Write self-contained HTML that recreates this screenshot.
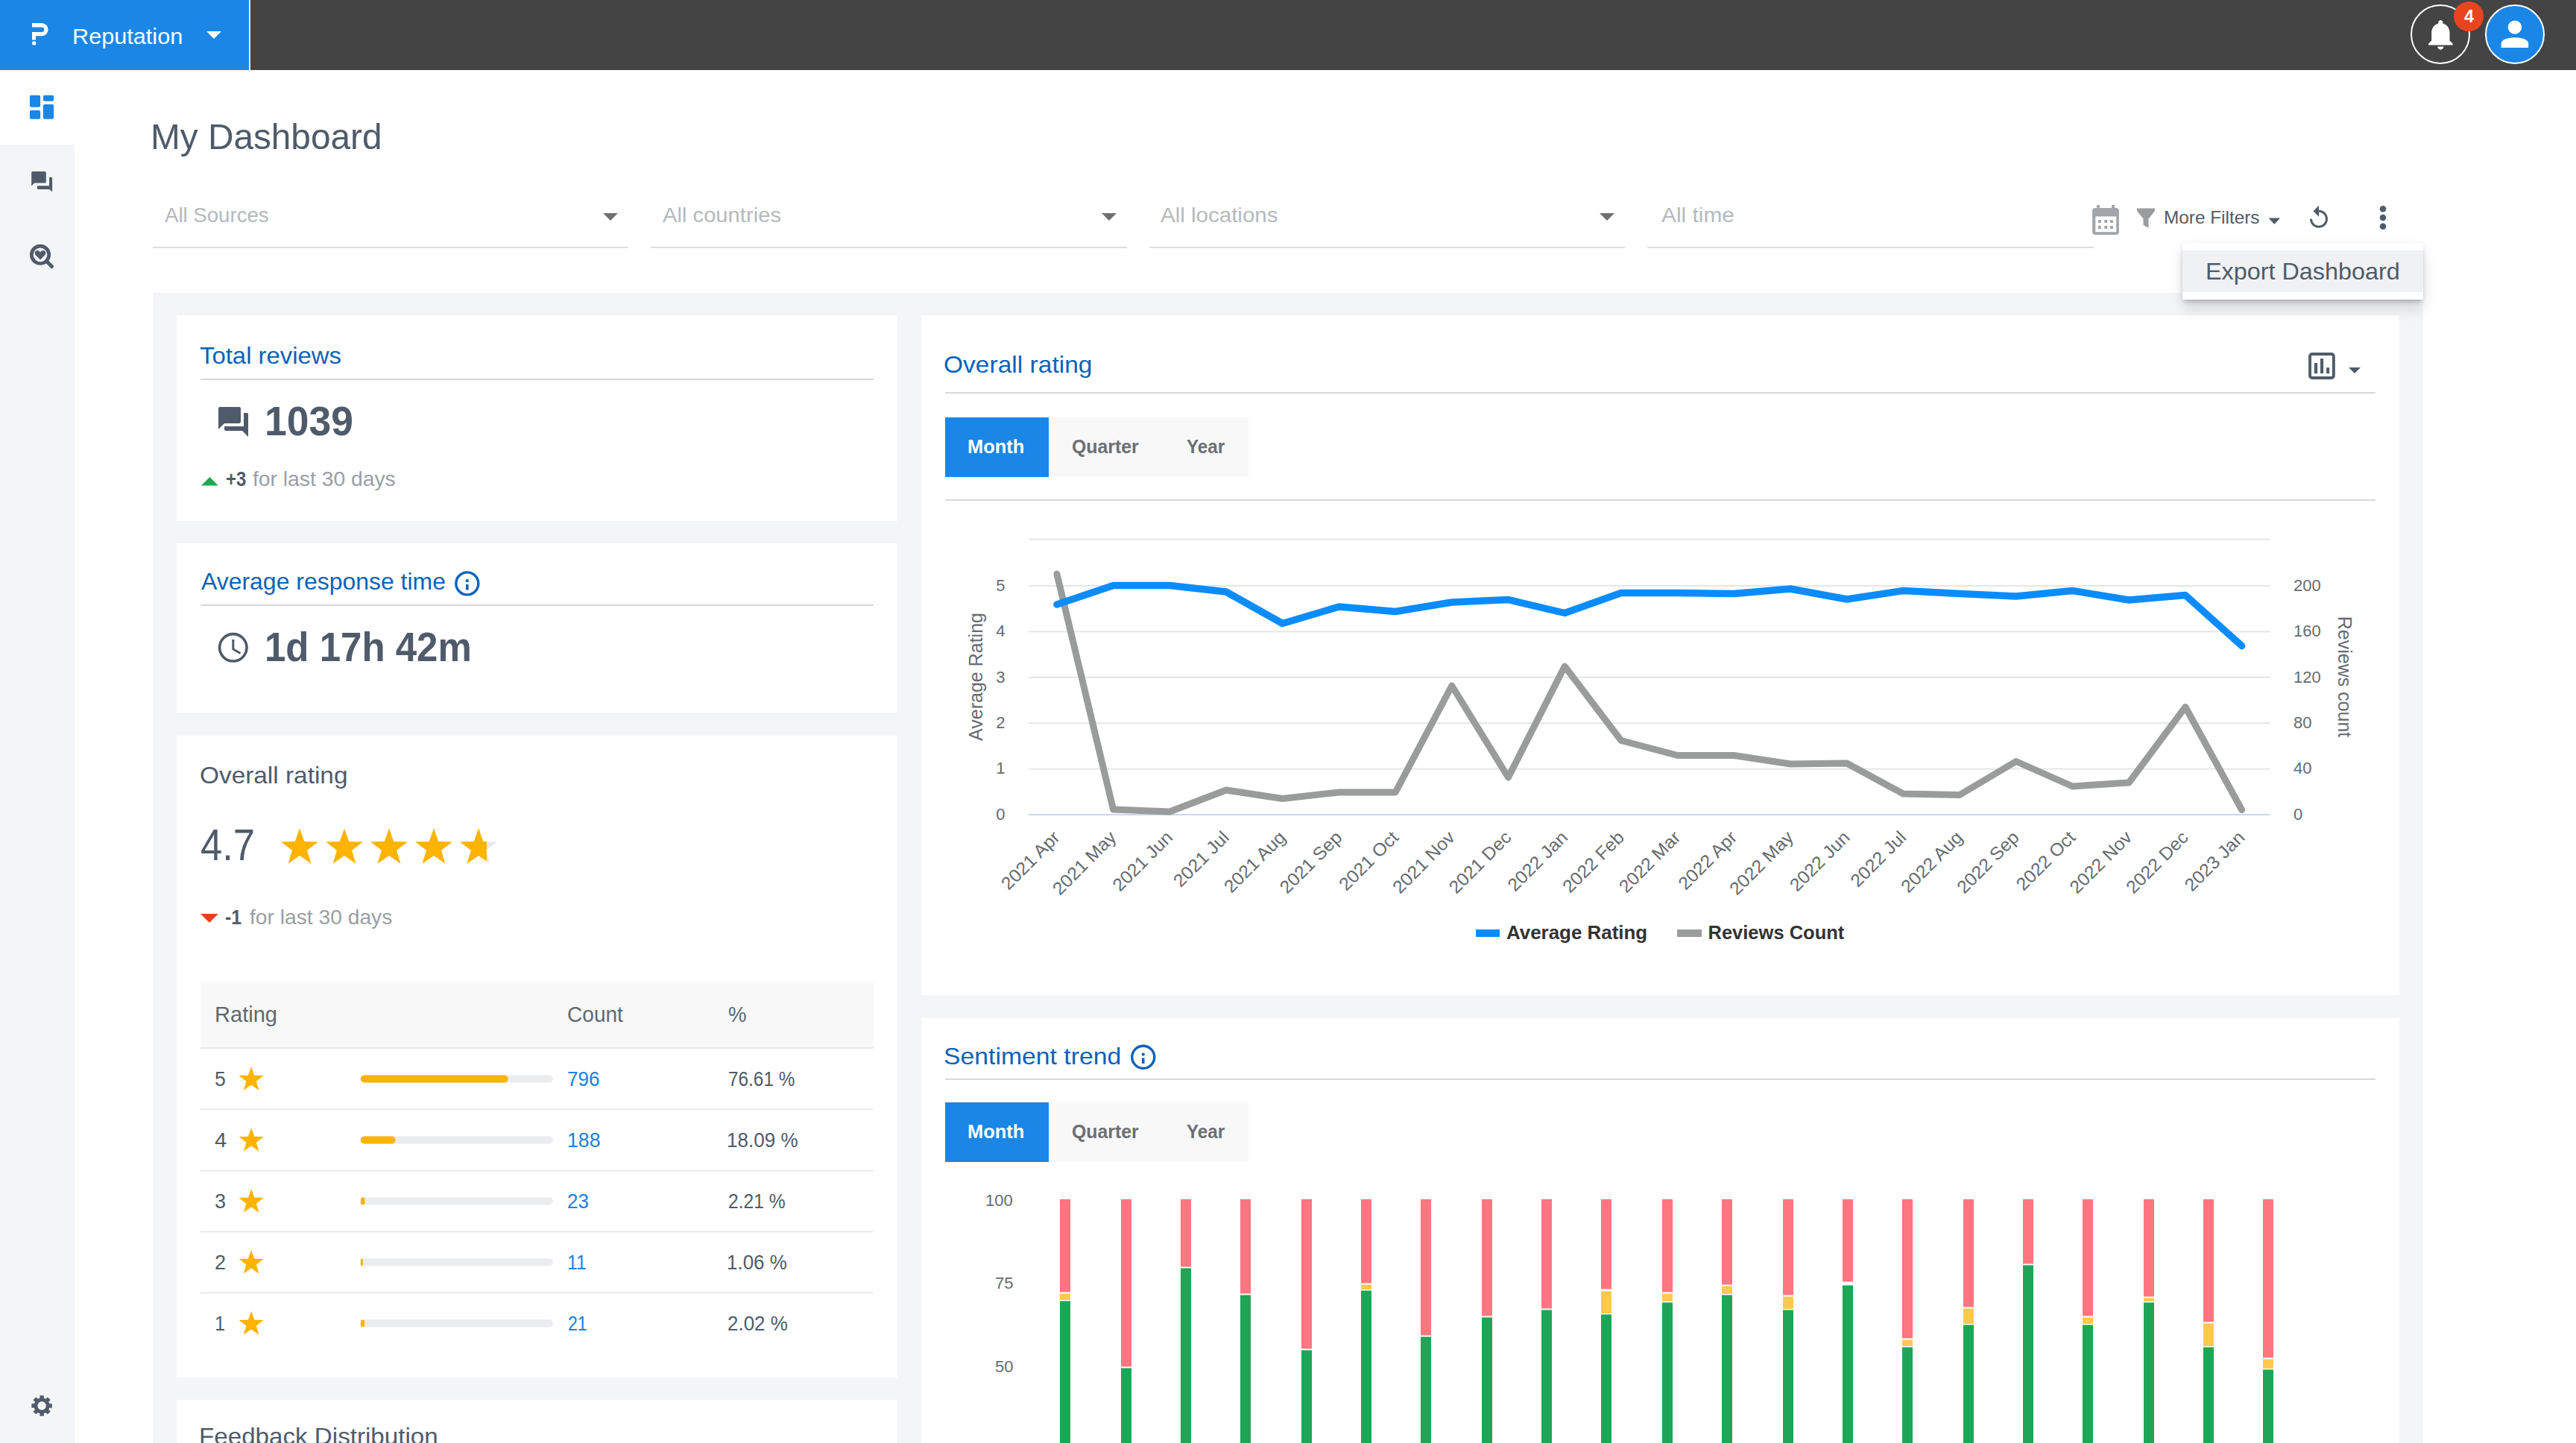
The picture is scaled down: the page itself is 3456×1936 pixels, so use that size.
<!DOCTYPE html>
<html><head><meta charset="utf-8"><title>My Dashboard</title>
<style>
html,body{margin:0;padding:0;width:3456px;height:1936px;overflow:hidden;background:#fff}
body{position:relative;font-family:"Liberation Sans",sans-serif}
.r{position:absolute;box-sizing:content-box}
.t{position:absolute;white-space:nowrap;line-height:1;font-family:"Liberation Sans",sans-serif}
svg{overflow:visible}
</style></head><body><div id="root" style="position:relative;width:3456px;height:1936px;overflow:hidden">
<div class="r" style="left:0px;top:0px;width:3456px;height:1936px;background:#ffffff;"></div>
<div class="r" style="left:0px;top:0px;width:334px;height:94px;background:#1a87e6;"></div>
<div class="r" style="left:334px;top:0px;width:2px;height:94px;background:#f2f2f2;"></div>
<div class="r" style="left:336px;top:0px;width:3120px;height:94px;background:#444444;"></div>
<div class="r" style="left:0px;top:94px;width:100px;height:1842px;background:#f4f5f7;"></div>
<div class="r" style="left:0px;top:94px;width:100px;height:100px;background:#ffffff;"></div>
<svg class="r" style="left:0;top:0" width="100" height="94" viewBox="0 0 100 94"><path fill="#fff" d="M43 31.1H56A8.55 8.55 0 0 1 56 48.2H48V53.4H43V43H56A3.25 3.25 0 0 0 56 36.5H43Z"/><circle cx="45.7" cy="57.9" r="2.65" fill="#fff"/></svg>
<div class="t" id="t0" style="left:97.13px;top:33.90px;font-size:30px;color:#ffffff;font-weight:400;transform:scaleX(1.0215);transform-origin:0 0;">Reputation</div>
<svg class="r" style="left:277px;top:42px" width="20" height="10"><path d="M0 0H20L10 10Z" fill="#fff"/></svg>
<div class="r" style="left:3234px;top:6px;width:76px;height:76px;border:2px solid #fff;border-radius:50%"></div>
<svg class="r" style="left:3249.5px;top:21.7px" width="48.7" height="48.7" viewBox="0 0 24 24"><path fill="#fff" d="M12 22c1.1 0 2-.9 2-2h-4c0 1.1.89 2 2 2zm6-6v-5c0-3.07-1.64-5.64-4.5-6.32V4c0-.83-.67-1.5-1.5-1.5s-1.5.67-1.5 1.5v.68C7.63 5.36 6 7.92 6 11v5l-2 2v1h16v-1l-2-2z"/></svg>
<div class="r" style="left:3292px;top:2px;width:40px;height:40px;border-radius:50%;background:#e8451e"></div>
<div class="t" id="t1" style="left:3305.92px;top:9.88px;font-size:24px;color:#fff;font-weight:700;transform:scaleX(0.9715);transform-origin:0 0;">4</div>
<div class="r" style="left:3334px;top:6px;width:76px;height:76px;border:2px solid #fff;border-radius:50%;background:#1a87e6"></div>
<svg class="r" style="left:3334px;top:6px" width="80" height="80" viewBox="3334 6 80 80"><circle cx="3373.9" cy="36.6" r="9.2" fill="#fff"/><path fill="#fff" d="M3355.6 64.1V58.5C3355.6 47.5 3392.2 47.5 3392.2 58.5V64.1Z"/></svg>
<svg class="r" style="left:0;top:94px" width="100" height="300" viewBox="0 94 100 300"><g fill="#1a87e6"><rect x="39.9" y="127.8" width="14.2" height="16" rx="2"/><rect x="39.9" y="147.9" width="14.2" height="11.9" rx="2"/><rect x="57.9" y="127.8" width="14.2" height="8" rx="2"/><rect x="57.9" y="140" width="14.2" height="19.8" rx="2"/></g><path fill="#4f5b6a" d="M43.7 229.9H60.3Q61.8 229.9 61.8 231.4V244Q61.8 245.5 60.3 245.5H46.2L42.2 249.5V231.4Q42.2 229.9 43.7 229.9Z M66.1 237.8H68.6Q70.1 237.8 70.1 239.3V257.6L66.3 253.9H51.5Q50 253.9 50 252.4V249.3H66.1Z"/><circle cx="54" cy="341.8" r="11.7" fill="none" stroke="#4f5b6a" stroke-width="4.7"/><path d="M62.5 350.5L69.5 357.5" stroke="#4f5b6a" stroke-width="5" stroke-linecap="round"/><path fill="#4f5b6a" d="M54 348.4L47.8 342.2C45.8 340.2 46.6 336 50 336C51.8 336 53 337 54 338.4C55 337 56.2 336 58 336C61.4 336 62.2 340.2 60.2 342.2Z"/></svg>
<svg class="r" style="left:0;top:1850px" width="100" height="86" viewBox="0 1850 100 86"><path fill="#4f5b6a" fill-rule="evenodd" d="M66.35 1883.30 L69.84 1883.30 L69.84 1888.70 L66.35 1888.70 L65.26 1891.34 L67.72 1893.80 L63.90 1897.62 L61.44 1895.16 L58.80 1896.25 L58.80 1899.74 L53.40 1899.74 L53.40 1896.25 L50.76 1895.16 L48.30 1897.62 L44.48 1893.80 L46.94 1891.34 L45.85 1888.70 L42.36 1888.70 L42.36 1883.30 L45.85 1883.30 L46.94 1880.66 L44.48 1878.20 L48.30 1874.38 L50.76 1876.84 L53.40 1875.75 L53.40 1872.26 L58.80 1872.26 L58.80 1875.75 L61.44 1876.84 L63.90 1874.38 L67.72 1878.20 L65.26 1880.66Z M56.1 1880.3A5.7 5.7 0 1 0 56.11 1880.3Z"/></svg>
<div class="t" id="t2" style="left:202.10px;top:158.52px;font-size:49px;color:#4f5b6a;font-weight:400;transform:scaleX(0.9743);transform-origin:0 0;">My Dashboard</div>
<div class="r" style="left:205px;top:331px;width:638px;height:2px;background:#dcdee0;"></div>
<div class="t" id="t3" style="left:220.51px;top:275.30px;font-size:28px;color:#b5b9be;font-weight:400;transform:scaleX(0.9857);transform-origin:0 0;">All Sources</div>
<svg class="r" style="left:809px;top:286px" width="20" height="10"><path d="M0 0H20L10 10Z" fill="#707070"/></svg>
<div class="r" style="left:873px;top:331px;width:639px;height:2px;background:#dcdee0;"></div>
<div class="t" id="t4" style="left:889.28px;top:275.30px;font-size:28px;color:#b5b9be;font-weight:400;transform:scaleX(1.0424);transform-origin:0 0;">All countries</div>
<svg class="r" style="left:1478px;top:286px" width="20" height="10"><path d="M0 0H20L10 10Z" fill="#707070"/></svg>
<div class="r" style="left:1542px;top:331px;width:638px;height:2px;background:#dcdee0;"></div>
<div class="t" id="t5" style="left:1557.47px;top:275.30px;font-size:28px;color:#b5b9be;font-weight:400;transform:scaleX(1.0541);transform-origin:0 0;">All locations</div>
<svg class="r" style="left:2146px;top:286px" width="20" height="10"><path d="M0 0H20L10 10Z" fill="#707070"/></svg>
<div class="r" style="left:2210px;top:331px;width:599px;height:2px;background:#dcdee0;"></div>
<div class="t" id="t6" style="left:2229.47px;top:275.30px;font-size:28px;color:#b5b9be;font-weight:400;transform:scaleX(1.0669);transform-origin:0 0;">All time</div>
<svg class="r" style="left:2800px;top:270px" width="460" height="50" viewBox="2800 270 460 50"><rect x="2807.1" y="279.1" width="35.8" height="35.9" rx="4" fill="#a2a5aa"/><rect x="2811.3" y="290.4" width="27.9" height="20.8" fill="#fff"/><g fill="#a2a5aa"><rect x="2814.8" y="295" width="3.9" height="4"/><rect x="2823.3" y="295" width="3.9" height="4"/><rect x="2831" y="295" width="3.9" height="4"/><rect x="2814.8" y="303" width="3.9" height="4"/><rect x="2823.3" y="303" width="3.9" height="4"/><rect x="2831" y="303" width="3.9" height="4"/><rect x="2813" y="275" width="4" height="6"/><rect x="2833" y="275" width="4" height="6"/></g><path fill="#9a9d9f" d="M2867 279.6H2891V283L2882.5 293.5V305.8L2875.5 302V293.5L2867 283Z"/><path fill="#4f5b6a" d="M3043.6 292.5H3059L3051.3 301Z"/><g transform="translate(3093 274.2) scale(1.5)"><path fill="#4f5b6a" d="M12 5V1L7 6l5 5V7c3.31 0 6 2.69 6 6s-2.69 6-6 6-6-2.69-6-6H4c0 4.42 3.58 8 8 8s8-3.58 8-8-3.58-8-8-8z"/></g><g fill="#4f5b6a"><circle cx="3197" cy="280.2" r="4.3"/><circle cx="3197" cy="292" r="4.3"/><circle cx="3197" cy="303.8" r="4.3"/></g></svg>
<div class="t" id="t7" style="left:2903.17px;top:279.68px;font-size:24px;color:#4f5b6a;font-weight:400;transform:scaleX(1.0145);transform-origin:0 0;">More Filters</div>
<div class="r" style="left:205px;top:393px;width:3045.5px;height:1543px;background:#f4f5f7;"></div>
<div class="r" style="left:237px;top:423px;width:966.5px;height:275.5px;background:#fff;"></div>
<div class="r" style="left:237px;top:729px;width:966.5px;height:227px;background:#fff;"></div>
<div class="r" style="left:237px;top:986.5px;width:966.5px;height:861px;background:#fff;"></div>
<div class="r" style="left:237px;top:1877.5px;width:966.5px;height:60px;background:#fff;"></div>
<div class="r" style="left:1236px;top:423px;width:1983px;height:912px;background:#fff;"></div>
<div class="r" style="left:1236px;top:1366px;width:1983px;height:570px;background:#fff;"></div>
<div class="t" id="t8" style="left:267.97px;top:460.91px;font-size:32px;color:#0a62b8;font-weight:400;transform:scaleX(1.0273);transform-origin:0 0;">Total reviews</div>
<div class="r" style="left:269px;top:508px;width:902.5px;height:2px;background:#d8d8d9;"></div>
<svg class="r" style="left:288.9px;top:541.6px" width="48" height="48" viewBox="0 0 24 24"><path fill="#4f5b6a" d="M21 6h-2v9H6v2c0 .55.45 1 1 1h11l4 4V7c0-.55-.45-1-1-1zm-4 6V3c0-.55-.45-1-1-1H3c-.55 0-1 .45-1 1v14l4-4h10c.55 0 1-.45 1-1z"/></svg>
<div class="t" id="t9" style="left:354.83px;top:536.59px;font-size:56px;color:#4f5b6a;font-weight:700;transform:scaleX(0.9541);transform-origin:0 0;">1039</div>
<svg class="r" style="left:269.6px;top:639.6px" width="23" height="12"><path d="M0 11.6H22.7L11.35 0Z" fill="#1ea653"/></svg>
<div class="t" id="t10" style="left:303.32px;top:629.10px;font-size:28px;color:#4f5b6a;font-weight:700;transform:scaleX(0.8558);transform-origin:0 0;">+3</div>
<div class="t" id="t11" style="left:338.99px;top:629.10px;font-size:28px;color:#9a9fa4;font-weight:400;transform:scaleX(1.0096);transform-origin:0 0;">for last 30 days</div>
<div class="t" id="t12" style="left:269.50px;top:764.01px;font-size:32px;color:#0a62b8;font-weight:400;transform:scaleX(0.9982);transform-origin:0 0;">Average response time</div>
<svg class="r" style="left:605px;top:761px" width="44" height="44" viewBox="605 761 44 44"><circle cx="626.8" cy="782.9" r="15" fill="none" stroke="#0a62b8" stroke-width="3.4"/><circle cx="626.8" cy="779.2" r="2.1" fill="#0a62b8"/><rect x="625" y="784" width="3.6" height="7.5" fill="#0a62b8"/></svg>
<div class="r" style="left:269px;top:811px;width:902.5px;height:2px;background:#d8d8d9;"></div>
<svg class="r" style="left:288px;top:844px" width="50" height="50" viewBox="288 844 50 50"><circle cx="312.8" cy="868.8" r="18.2" fill="none" stroke="#4f5b6a" stroke-width="3.6"/><path d="M312.8 858V871L322.5 876.5" fill="none" stroke="#4f5b6a" stroke-width="3"/></svg>
<div class="t" id="t13" style="left:354.92px;top:839.99px;font-size:56px;color:#4f5b6a;font-weight:700;transform:scaleX(0.9108);transform-origin:0 0;">1d 17h 42m</div>
<div class="t" id="t14" style="left:267.93px;top:1024.11px;font-size:32px;color:#4f5b6a;font-weight:400;transform:scaleX(1.0428);transform-origin:0 0;">Overall rating</div>
<div class="t" id="t15" style="left:269.44px;top:1104.40px;font-size:60px;color:#4f5b6a;font-weight:400;transform:scaleX(0.8755);transform-origin:0 0;">4.7</div>
<svg class="r" style="left:360px;top:1100px" width="330" height="70" viewBox="360 1100 330 70"><defs><clipPath id="c5"><rect x="617" y="1100" width="36" height="70"/></clipPath></defs><path d="M402.00 1111.30 L408.23 1128.92 L426.92 1129.40 L412.08 1140.78 L417.40 1158.70 L402.00 1148.10 L386.60 1158.70 L391.92 1140.78 L377.08 1129.40 L395.77 1128.92Z" fill="#fdb300"/><path d="M462.00 1111.30 L468.23 1128.92 L486.92 1129.40 L472.08 1140.78 L477.40 1158.70 L462.00 1148.10 L446.60 1158.70 L451.92 1140.78 L437.08 1129.40 L455.77 1128.92Z" fill="#fdb300"/><path d="M522.00 1111.30 L528.23 1128.92 L546.92 1129.40 L532.08 1140.78 L537.40 1158.70 L522.00 1148.10 L506.60 1158.70 L511.92 1140.78 L497.08 1129.40 L515.77 1128.92Z" fill="#fdb300"/><path d="M582.00 1111.30 L588.23 1128.92 L606.92 1129.40 L592.08 1140.78 L597.40 1158.70 L582.00 1148.10 L566.60 1158.70 L571.92 1140.78 L557.08 1129.40 L575.77 1128.92Z" fill="#fdb300"/><path d="M642.00 1111.30 L648.23 1128.92 L666.92 1129.40 L652.08 1140.78 L657.40 1158.70 L642.00 1148.10 L626.60 1158.70 L631.92 1140.78 L617.08 1129.40 L635.77 1128.92Z" fill="#e9eaec"/><path d="M642.00 1111.30 L648.23 1128.92 L666.92 1129.40 L652.08 1140.78 L657.40 1158.70 L642.00 1148.10 L626.60 1158.70 L631.92 1140.78 L617.08 1129.40 L635.77 1128.92Z" fill="#fdb300" clip-path="url(#c5)"/></svg>
<svg class="r" style="left:269px;top:1225.7px" width="24" height="13"><path d="M0 0H23.9L11.95 12.1Z" fill="#e5431f"/></svg>
<div class="t" id="t16" style="left:302.16px;top:1216.70px;font-size:28px;color:#4f5b6a;font-weight:700;transform:scaleX(0.8871);transform-origin:0 0;">-1</div>
<div class="t" id="t17" style="left:334.50px;top:1216.70px;font-size:28px;color:#9a9fa4;font-weight:400;transform:scaleX(1.0074);transform-origin:0 0;">for last 30 days</div>
<div class="r" style="left:269px;top:1318px;width:902.5px;height:88.5px;background:#f8f8f8;"></div>
<div class="r" style="left:269px;top:1405px;width:902.5px;height:2px;background:#e6e7e8;"></div>
<div class="t" id="t18" style="left:287.58px;top:1346.30px;font-size:30px;color:#62676d;font-weight:400;transform:scaleX(0.9683);transform-origin:0 0;">Rating</div>
<div class="t" id="t19" style="left:760.60px;top:1346.30px;font-size:30px;color:#62676d;font-weight:400;transform:scaleX(0.9359);transform-origin:0 0;">Count</div>
<div class="t" id="t20" style="left:976.62px;top:1346.30px;font-size:30px;color:#62676d;font-weight:400;transform:scaleX(0.9167);transform-origin:0 0;">%</div>
<div class="t" id="t21" style="left:288.00px;top:1434.84px;font-size:27px;color:#4f5b6a;font-weight:400;transform:scaleX(0.9862);transform-origin:0 0;">5</div>
<div class="t" id="t22" style="left:760.59px;top:1434.10px;font-size:28px;color:#1b7fe0;font-weight:400;transform:scaleX(0.9324);transform-origin:0 0;">796</div>
<div class="t" id="t23" style="left:976.51px;top:1434.10px;font-size:28px;color:#4f5b6a;font-weight:400;transform:scaleX(0.8701);transform-origin:0 0;">76.61 %</div>
<div class="t" id="t24" style="left:287.92px;top:1516.84px;font-size:27px;color:#4f5b6a;font-weight:400;transform:scaleX(1.0769);transform-origin:0 0;">4</div>
<div class="t" id="t25" style="left:760.62px;top:1516.10px;font-size:28px;color:#1b7fe0;font-weight:400;transform:scaleX(0.9538);transform-origin:0 0;">188</div>
<div class="t" id="t26" style="left:975.35px;top:1516.10px;font-size:28px;color:#4f5b6a;font-weight:400;transform:scaleX(0.9306);transform-origin:0 0;">18.09 %</div>
<div class="t" id="t27" style="left:288.00px;top:1598.84px;font-size:27px;color:#4f5b6a;font-weight:400;">3</div>
<div class="t" id="t28" style="left:760.61px;top:1598.10px;font-size:28px;color:#1b7fe0;font-weight:400;transform:scaleX(0.9286);transform-origin:0 0;">23</div>
<div class="t" id="t29" style="left:976.50px;top:1598.10px;font-size:28px;color:#4f5b6a;font-weight:400;transform:scaleX(0.8800);transform-origin:0 0;">2.21 %</div>
<div class="t" id="t30" style="left:288.00px;top:1680.84px;font-size:27px;color:#4f5b6a;font-weight:400;">2</div>
<div class="t" id="t31" style="left:760.80px;top:1680.10px;font-size:28px;color:#1b7fe0;font-weight:400;transform:scaleX(0.8809);transform-origin:0 0;">11</div>
<div class="t" id="t32" style="left:975.36px;top:1680.10px;font-size:28px;color:#4f5b6a;font-weight:400;transform:scaleX(0.9276);transform-origin:0 0;">1.06 %</div>
<div class="t" id="t33" style="left:288.13px;top:1762.84px;font-size:27px;color:#4f5b6a;font-weight:400;transform:scaleX(0.9353);transform-origin:0 0;">1</div>
<div class="t" id="t34" style="left:761.75px;top:1762.10px;font-size:28px;color:#1b7fe0;font-weight:400;transform:scaleX(0.8229);transform-origin:0 0;">21</div>
<div class="t" id="t35" style="left:976.42px;top:1762.10px;font-size:28px;color:#4f5b6a;font-weight:400;transform:scaleX(0.9270);transform-origin:0 0;">2.02 %</div>
<svg class="r" style="left:269px;top:1407px" width="903" height="420" viewBox="269 1407 903 420"><path d="M337.10 1431.00 L341.27 1442.76 L353.74 1443.09 L343.85 1450.69 L347.39 1462.66 L337.10 1455.60 L326.81 1462.66 L330.35 1450.69 L320.46 1443.09 L332.93 1442.76Z" fill="#fdb300"/><rect x="483.8" y="1442.5" width="258.2" height="10" rx="5" fill="#ebeced"/><rect x="483.8" y="1442.5" width="197.8" height="10" rx="5.0" fill="#fdb300"/><rect x="269" y="1487.5" width="902.5" height="2" fill="#e8e9ea"/><path d="M337.10 1513.00 L341.27 1524.76 L353.74 1525.09 L343.85 1532.69 L347.39 1544.66 L337.10 1537.60 L326.81 1544.66 L330.35 1532.69 L320.46 1525.09 L332.93 1524.76Z" fill="#fdb300"/><rect x="483.8" y="1524.5" width="258.2" height="10" rx="5" fill="#ebeced"/><rect x="483.8" y="1524.5" width="46.7" height="10" rx="5.0" fill="#fdb300"/><rect x="269" y="1569.5" width="902.5" height="2" fill="#e8e9ea"/><path d="M337.10 1595.00 L341.27 1606.76 L353.74 1607.09 L343.85 1614.69 L347.39 1626.66 L337.10 1619.60 L326.81 1626.66 L330.35 1614.69 L320.46 1607.09 L332.93 1606.76Z" fill="#fdb300"/><rect x="483.8" y="1606.5" width="258.2" height="10" rx="5" fill="#ebeced"/><rect x="483.8" y="1606.5" width="5.7" height="10" rx="2.9" fill="#fdb300"/><rect x="269" y="1651.5" width="902.5" height="2" fill="#e8e9ea"/><path d="M337.10 1677.00 L341.27 1688.76 L353.74 1689.09 L343.85 1696.69 L347.39 1708.66 L337.10 1701.60 L326.81 1708.66 L330.35 1696.69 L320.46 1689.09 L332.93 1688.76Z" fill="#fdb300"/><rect x="483.8" y="1688.5" width="258.2" height="10" rx="5" fill="#ebeced"/><rect x="483.8" y="1688.5" width="3.0" height="10" rx="1.5" fill="#fdb300"/><rect x="269" y="1733.5" width="902.5" height="2" fill="#e8e9ea"/><path d="M337.10 1759.00 L341.27 1770.76 L353.74 1771.09 L343.85 1778.69 L347.39 1790.66 L337.10 1783.60 L326.81 1790.66 L330.35 1778.69 L320.46 1771.09 L332.93 1770.76Z" fill="#fdb300"/><rect x="483.8" y="1770.5" width="258.2" height="10" rx="5" fill="#ebeced"/><rect x="483.8" y="1770.5" width="5.2" height="10" rx="2.6" fill="#fdb300"/></svg>
<div class="t" id="t36" style="left:266.89px;top:1911.41px;font-size:32px;color:#4f5b6a;font-weight:400;transform:scaleX(1.0362);transform-origin:0 0;">Feedback Distribution</div>
<div class="t" id="t37" style="left:1266.43px;top:472.91px;font-size:32px;color:#0a62b8;font-weight:400;transform:scaleX(1.0482);transform-origin:0 0;">Overall rating</div>
<svg class="r" style="left:3090px;top:465px" width="90" height="50" viewBox="3090 465 90 50"><rect x="3099.05" y="474.95" width="31.8" height="32" rx="3" fill="none" stroke="#4f5b6a" stroke-width="3.9"/><rect x="3104.9" y="487" width="4.2" height="14" fill="#4f5b6a"/><rect x="3113" y="481.1" width="4.1" height="19.9" fill="#4f5b6a"/><rect x="3121.1" y="493.2" width="4" height="7.8" fill="#4f5b6a"/><path d="M3151 493H3167L3159 501Z" fill="#4f5b6a"/></svg>
<div class="r" style="left:1268px;top:526px;width:1919px;height:2px;background:#d8d8d9;"></div>
<div class="r" style="left:1268px;top:560px;width:407px;height:80px;background:#f8f8f8;"></div>
<div class="r" style="left:1268px;top:560px;width:139px;height:80px;background:#1a87e6;"></div>
<div class="t" id="t38" style="left:1298.30px;top:586.29px;font-size:26px;color:#fff;font-weight:700;transform:scaleX(0.9796);transform-origin:0 0;">Month</div>
<div class="t" id="t39" style="left:1438.44px;top:586.29px;font-size:26px;color:#6b6f75;font-weight:700;transform:scaleX(0.9556);transform-origin:0 0;">Quarter</div>
<div class="t" id="t40" style="left:1592.42px;top:586.29px;font-size:26px;color:#6b6f75;font-weight:700;transform:scaleX(0.9296);transform-origin:0 0;">Year</div>
<div class="r" style="left:1268px;top:670px;width:1919px;height:2px;background:#d8d8d9;"></div>
<svg class="r" style="left:1236px;top:680px" width="1983" height="655" viewBox="1236 680 1983 655"><rect x="1380" y="1092.0" width="1665.5" height="2" fill="#ccd6eb"/><rect x="1380" y="1030.6" width="1665.5" height="2" fill="#e6e6e6"/><rect x="1380" y="969.2" width="1665.5" height="2" fill="#e6e6e6"/><rect x="1380" y="907.8" width="1665.5" height="2" fill="#e6e6e6"/><rect x="1380" y="846.4" width="1665.5" height="2" fill="#e6e6e6"/><rect x="1380" y="785.0" width="1665.5" height="2" fill="#e6e6e6"/><rect x="1380" y="722.5" width="1665.5" height="2" fill="#e6e6e6"/><polyline points="1417.9,770.0 1493.6,1086.0 1569.3,1089.0 1645.0,1060.0 1720.7,1071.5 1796.4,1063.0 1872.1,1063.0 1947.8,920.0 2023.5,1043.0 2099.2,894.0 2174.9,993.5 2250.6,1013.5 2326.3,1013.5 2402.0,1025.0 2477.7,1024.0 2553.4,1065.0 2629.1,1066.5 2704.8,1021.5 2780.5,1055.0 2856.2,1050.0 2931.9,948.5 3007.6,1086.5" fill="none" stroke="#9a9c9c" stroke-width="9" stroke-linejoin="round" stroke-linecap="round"/><polyline points="1417.9,811.0 1493.6,785.5 1569.3,785.5 1645.0,794.0 1720.7,836.5 1796.4,814.0 1872.1,820.5 1947.8,808.0 2023.5,804.5 2099.2,822.5 2174.9,795.5 2250.6,795.5 2326.3,796.5 2402.0,790.0 2477.7,804.0 2553.4,792.5 2629.1,796.5 2704.8,800.0 2780.5,792.5 2856.2,805.0 2931.9,798.5 3007.6,866.5" fill="none" stroke="#0a8cff" stroke-width="9.5" stroke-linejoin="round" stroke-linecap="round"/></svg>
<div class="t" style="right:2107.57px;top:1081.87px;font-size:22px;color:#666b70;font-weight:400;">0</div>
<div class="t" id="t41" style="left:3077.00px;top:1081.87px;font-size:22px;color:#666b70;font-weight:400;">0</div>
<div class="t" style="right:2107.57px;top:1020.47px;font-size:22px;color:#666b70;font-weight:400;">1</div>
<div class="t" id="t42" style="left:3077.00px;top:1020.47px;font-size:22px;color:#666b70;font-weight:400;">40</div>
<div class="t" style="right:2107.57px;top:959.07px;font-size:22px;color:#666b70;font-weight:400;">2</div>
<div class="t" id="t43" style="left:3077.00px;top:959.07px;font-size:22px;color:#666b70;font-weight:400;">80</div>
<div class="t" style="right:2107.57px;top:897.67px;font-size:22px;color:#666b70;font-weight:400;">3</div>
<div class="t" id="t44" style="left:3077.00px;top:897.67px;font-size:22px;color:#666b70;font-weight:400;">120</div>
<div class="t" style="right:2107.57px;top:836.27px;font-size:22px;color:#666b70;font-weight:400;">4</div>
<div class="t" id="t45" style="left:3077.00px;top:836.27px;font-size:22px;color:#666b70;font-weight:400;">160</div>
<div class="t" style="right:2107.57px;top:774.87px;font-size:22px;color:#666b70;font-weight:400;">5</div>
<div class="t" id="t46" style="left:3077.00px;top:774.87px;font-size:22px;color:#666b70;font-weight:400;">200</div>
<svg class="r" style="left:1236px;top:1090px" width="1983" height="140" viewBox="1236 1090 1983 140"><text x="1423.4" y="1125" text-anchor="end" textLength="99.4" lengthAdjust="spacingAndGlyphs" transform="rotate(-45 1423.4 1125)" font-size="24" fill="#666b70" font-family="Liberation Sans">2021 Apr</text><text x="1499.1" y="1125" text-anchor="end" textLength="109.1" lengthAdjust="spacingAndGlyphs" transform="rotate(-45 1499.1 1125)" font-size="24" fill="#666b70" font-family="Liberation Sans">2021 May</text><text x="1574.8" y="1125" text-anchor="end" textLength="102.2" lengthAdjust="spacingAndGlyphs" transform="rotate(-45 1574.8 1125)" font-size="24" fill="#666b70" font-family="Liberation Sans">2021 Jun</text><text x="1650.5" y="1125" text-anchor="end" textLength="93.9" lengthAdjust="spacingAndGlyphs" transform="rotate(-45 1650.5 1125)" font-size="24" fill="#666b70" font-family="Liberation Sans">2021 Jul</text><text x="1726.2" y="1125" text-anchor="end" textLength="105.0" lengthAdjust="spacingAndGlyphs" transform="rotate(-45 1726.2 1125)" font-size="24" fill="#666b70" font-family="Liberation Sans">2021 Aug</text><text x="1801.9" y="1125" text-anchor="end" textLength="106.3" lengthAdjust="spacingAndGlyphs" transform="rotate(-45 1801.9 1125)" font-size="24" fill="#666b70" font-family="Liberation Sans">2021 Sep</text><text x="1877.6" y="1125" text-anchor="end" textLength="100.8" lengthAdjust="spacingAndGlyphs" transform="rotate(-45 1877.6 1125)" font-size="24" fill="#666b70" font-family="Liberation Sans">2021 Oct</text><text x="1953.3" y="1125" text-anchor="end" textLength="106.3" lengthAdjust="spacingAndGlyphs" transform="rotate(-45 1953.3 1125)" font-size="24" fill="#666b70" font-family="Liberation Sans">2021 Nov</text><text x="2029.0" y="1125" text-anchor="end" textLength="106.3" lengthAdjust="spacingAndGlyphs" transform="rotate(-45 2029.0 1125)" font-size="24" fill="#666b70" font-family="Liberation Sans">2021 Dec</text><text x="2104.7" y="1125" text-anchor="end" textLength="102.2" lengthAdjust="spacingAndGlyphs" transform="rotate(-45 2104.7 1125)" font-size="24" fill="#666b70" font-family="Liberation Sans">2022 Jan</text><text x="2180.4" y="1125" text-anchor="end" textLength="104.9" lengthAdjust="spacingAndGlyphs" transform="rotate(-45 2180.4 1125)" font-size="24" fill="#666b70" font-family="Liberation Sans">2022 Feb</text><text x="2256.1" y="1125" text-anchor="end" textLength="104.9" lengthAdjust="spacingAndGlyphs" transform="rotate(-45 2256.1 1125)" font-size="24" fill="#666b70" font-family="Liberation Sans">2022 Mar</text><text x="2331.8" y="1125" text-anchor="end" textLength="99.4" lengthAdjust="spacingAndGlyphs" transform="rotate(-45 2331.8 1125)" font-size="24" fill="#666b70" font-family="Liberation Sans">2022 Apr</text><text x="2407.5" y="1125" text-anchor="end" textLength="109.1" lengthAdjust="spacingAndGlyphs" transform="rotate(-45 2407.5 1125)" font-size="24" fill="#666b70" font-family="Liberation Sans">2022 May</text><text x="2483.2" y="1125" text-anchor="end" textLength="102.2" lengthAdjust="spacingAndGlyphs" transform="rotate(-45 2483.2 1125)" font-size="24" fill="#666b70" font-family="Liberation Sans">2022 Jun</text><text x="2558.9" y="1125" text-anchor="end" textLength="93.9" lengthAdjust="spacingAndGlyphs" transform="rotate(-45 2558.9 1125)" font-size="24" fill="#666b70" font-family="Liberation Sans">2022 Jul</text><text x="2634.6" y="1125" text-anchor="end" textLength="105.0" lengthAdjust="spacingAndGlyphs" transform="rotate(-45 2634.6 1125)" font-size="24" fill="#666b70" font-family="Liberation Sans">2022 Aug</text><text x="2710.3" y="1125" text-anchor="end" textLength="106.3" lengthAdjust="spacingAndGlyphs" transform="rotate(-45 2710.3 1125)" font-size="24" fill="#666b70" font-family="Liberation Sans">2022 Sep</text><text x="2786.0" y="1125" text-anchor="end" textLength="100.8" lengthAdjust="spacingAndGlyphs" transform="rotate(-45 2786.0 1125)" font-size="24" fill="#666b70" font-family="Liberation Sans">2022 Oct</text><text x="2861.7" y="1125" text-anchor="end" textLength="106.3" lengthAdjust="spacingAndGlyphs" transform="rotate(-45 2861.7 1125)" font-size="24" fill="#666b70" font-family="Liberation Sans">2022 Nov</text><text x="2937.4" y="1125" text-anchor="end" textLength="106.3" lengthAdjust="spacingAndGlyphs" transform="rotate(-45 2937.4 1125)" font-size="24" fill="#666b70" font-family="Liberation Sans">2022 Dec</text><text x="3013.1" y="1125" text-anchor="end" textLength="102.2" lengthAdjust="spacingAndGlyphs" transform="rotate(-45 3013.1 1125)" font-size="24" fill="#666b70" font-family="Liberation Sans">2023 Jan</text></svg>
<div class="t" style="left:1309px;top:908px;font-size:25px;color:#666b70;transform:translate(-50%,-50%) rotate(-90deg);line-height:25px">Average Rating</div>
<div class="t" style="left:3144.5px;top:908px;font-size:25px;color:#666b70;transform:translate(-50%,-50%) rotate(90deg);line-height:25px">Reviews count</div>
<div class="r" style="left:1980px;top:1246.5px;width:31.5px;height:10px;background:#0a8cff;"></div>
<div class="r" style="left:2250px;top:1246.5px;width:32.5px;height:10px;background:#9a9c9c;"></div>
<div class="t" id="t47" style="left:2021.49px;top:1239.41px;font-size:25.5px;color:#333333;font-weight:700;transform:scaleX(1.0163);transform-origin:0 0;">Average Rating</div>
<div class="t" id="t48" style="left:2291.50px;top:1239.41px;font-size:25.5px;color:#333333;font-weight:700;">Reviews Count</div>
<div class="t" id="t49" style="left:1266.36px;top:1401.41px;font-size:32px;color:#0a62b8;font-weight:400;transform:scaleX(1.0543);transform-origin:0 0;">Sentiment trend</div>
<svg class="r" style="left:1510px;top:1395px" width="46" height="46" viewBox="1510 1395 46 46"><circle cx="1533.75" cy="1418.25" r="15" fill="none" stroke="#0a62b8" stroke-width="3.4"/><circle cx="1533.75" cy="1414.55" r="2.1" fill="#0a62b8"/><rect x="1531.95" y="1419.35" width="3.6" height="7.5" fill="#0a62b8"/></svg>
<div class="r" style="left:1268px;top:1447px;width:1919px;height:2px;background:#d8d8d9;"></div>
<div class="r" style="left:1268px;top:1479px;width:407px;height:80px;background:#f8f8f8;"></div>
<div class="r" style="left:1268px;top:1479px;width:139px;height:80px;background:#1a87e6;"></div>
<div class="t" id="t50" style="left:1298.30px;top:1505.29px;font-size:26px;color:#fff;font-weight:700;transform:scaleX(0.9796);transform-origin:0 0;">Month</div>
<div class="t" id="t51" style="left:1438.44px;top:1505.29px;font-size:26px;color:#6b6f75;font-weight:700;transform:scaleX(0.9556);transform-origin:0 0;">Quarter</div>
<div class="t" id="t52" style="left:1592.42px;top:1505.29px;font-size:26px;color:#6b6f75;font-weight:700;transform:scaleX(0.9296);transform-origin:0 0;">Year</div>
<div class="t" style="right:2097.30px;top:1600.37px;font-size:22px;color:#666b70;font-weight:400;">100</div>
<div class="t" style="right:2096.53px;top:1711.37px;font-size:22px;color:#666b70;font-weight:400;">75</div>
<div class="t" style="right:2096.53px;top:1822.87px;font-size:22px;color:#666b70;font-weight:400;">50</div>
<svg class="r" style="left:1236px;top:1600px" width="1983" height="336" viewBox="1236 1600 1983 336"><rect x="1422" y="1609" width="14" height="124.5" fill="#ff7580"/><rect x="1422" y="1735.5" width="14" height="8.5" fill="#ffc950"/><rect x="1422" y="1745.5" width="14" height="192" fill="#1ea656"/><rect x="1504" y="1609" width="14" height="224.5" fill="#ff7580"/><rect x="1504" y="1835.5" width="14" height="102" fill="#1ea656"/><rect x="1584" y="1609" width="14" height="90.5" fill="#ff7580"/><rect x="1584" y="1701.5" width="14" height="236" fill="#1ea656"/><rect x="1664" y="1609" width="14" height="126.5" fill="#ff7580"/><rect x="1664" y="1737.5" width="14" height="200" fill="#1ea656"/><rect x="1746" y="1609" width="14" height="200.5" fill="#ff7580"/><rect x="1746" y="1811.5" width="14" height="126" fill="#1ea656"/><rect x="1826" y="1609" width="14" height="112.5" fill="#ff7580"/><rect x="1826" y="1723.5" width="14" height="6.5" fill="#ffc950"/><rect x="1826" y="1731.5" width="14" height="206" fill="#1ea656"/><rect x="1906" y="1609" width="14" height="182.5" fill="#ff7580"/><rect x="1906" y="1793.5" width="14" height="144" fill="#1ea656"/><rect x="1988" y="1609" width="14" height="156.5" fill="#ff7580"/><rect x="1988" y="1767.5" width="14" height="170" fill="#1ea656"/><rect x="2068" y="1609" width="14" height="146.5" fill="#ff7580"/><rect x="2068" y="1757.5" width="14" height="180" fill="#1ea656"/><rect x="2148" y="1609" width="14" height="120.5" fill="#ff7580"/><rect x="2148" y="1732.5" width="14" height="29.5" fill="#ffc950"/><rect x="2148" y="1763.5" width="14" height="174" fill="#1ea656"/><rect x="2230" y="1609" width="14" height="124.5" fill="#ff7580"/><rect x="2230" y="1735.5" width="14" height="10.5" fill="#ffc950"/><rect x="2230" y="1747.5" width="14" height="190" fill="#1ea656"/><rect x="2310" y="1609" width="14" height="114.5" fill="#ff7580"/><rect x="2310" y="1725.5" width="14" height="10.5" fill="#ffc950"/><rect x="2310" y="1737.5" width="14" height="200" fill="#1ea656"/><rect x="2392" y="1609" width="14" height="128.5" fill="#ff7580"/><rect x="2392" y="1739.5" width="14" height="16.5" fill="#ffc950"/><rect x="2392" y="1757.5" width="14" height="180" fill="#1ea656"/><rect x="2472" y="1609" width="14" height="110.5" fill="#ff7580"/><rect x="2472" y="1724.5" width="14" height="213" fill="#1ea656"/><rect x="2552" y="1609" width="14" height="186.5" fill="#ff7580"/><rect x="2552" y="1797.5" width="14" height="8.5" fill="#ffc950"/><rect x="2552" y="1807.5" width="14" height="130" fill="#1ea656"/><rect x="2634" y="1609" width="14" height="144.5" fill="#ff7580"/><rect x="2634" y="1755.5" width="14" height="20.5" fill="#ffc950"/><rect x="2634" y="1777.5" width="14" height="160" fill="#1ea656"/><rect x="2714" y="1609" width="14" height="86.5" fill="#ff7580"/><rect x="2714" y="1697.5" width="14" height="240" fill="#1ea656"/><rect x="2794" y="1609" width="14" height="156.5" fill="#ff7580"/><rect x="2794" y="1767.5" width="14" height="8.5" fill="#ffc950"/><rect x="2794" y="1777.5" width="14" height="160" fill="#1ea656"/><rect x="2876" y="1609" width="14" height="130.5" fill="#ff7580"/><rect x="2876" y="1741.5" width="14" height="4.5" fill="#ffc950"/><rect x="2876" y="1747.5" width="14" height="190" fill="#1ea656"/><rect x="2956" y="1609" width="14" height="164.5" fill="#ff7580"/><rect x="2956" y="1775.5" width="14" height="30.5" fill="#ffc950"/><rect x="2956" y="1807.5" width="14" height="130" fill="#1ea656"/><rect x="3036" y="1609" width="14" height="212.5" fill="#ff7580"/><rect x="3036" y="1823.5" width="14" height="12.5" fill="#ffc950"/><rect x="3036" y="1837.5" width="14" height="100" fill="#1ea656"/></svg>
<div class="r" style="left:2928px;top:326px;width:322.5px;height:76px;background:#fff;box-shadow:0 12px 18px rgba(0,0,0,.13),0 4px 6px -2px rgba(0,0,0,.22),0 0 8px rgba(0,0,0,.05)"></div>
<div class="r" style="left:2928px;top:336px;width:322.5px;height:56px;background:#f0f1f3;"></div>
<div class="t" id="t53" style="left:2958.57px;top:348.21px;font-size:32px;color:#4f5b6a;font-weight:400;transform:scaleX(1.0111);transform-origin:0 0;">Export Dashboard</div>
</div></body></html>
